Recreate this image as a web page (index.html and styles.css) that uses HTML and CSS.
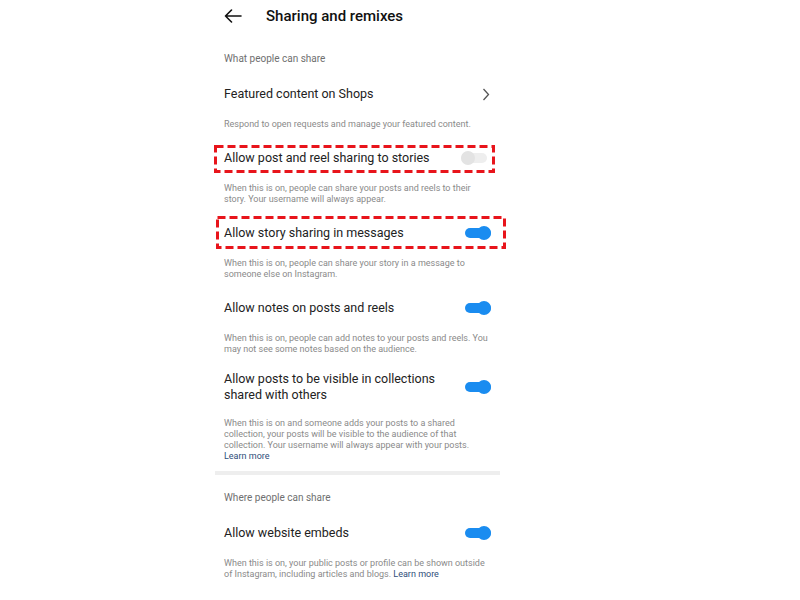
FILE: index.html
```html
<!DOCTYPE html>
<html lang="en">
<head>
    <meta charset="UTF-8">
    <meta name="viewport" content="width=device-width, initial-scale=1.0">
    <title>Sharing and remixes</title>
    <link rel="stylesheet" href="styles.css">
</head>
<body>
<div class="screen">
    <div class="header">
        <svg class="back" width="18" height="14" viewBox="0 0 18 14">
            <path d="M17 7H1.5M7.5 1L1.5 7l6 6" fill="none" stroke="#111" stroke-width="1.6" stroke-linecap="round" stroke-linejoin="round"/>
        </svg>
        <h1>Sharing and remixes</h1>
    </div>

    <p class="section-title first">What people can share</p>

    <div class="setting">
        <div class="row">
            <span class="label">Featured content on Shops</span>
            <svg class="chevron" width="8" height="13" viewBox="0 0 8 13">
                <path d="M1.5 1l5 5.5-5 5.5" fill="none" stroke="#555" stroke-width="1.3"/>
            </svg>
        </div>
        <p class="desc">Respond to open requests and manage your featured content.</p>
    </div>

    <div class="setting">
        <div class="row">
            <span class="label">Allow post and reel sharing to stories</span>
            <span class="toggle off"></span>
            <svg class="mark mark-one"><rect x="1.5" y="1.5" width="100%" height="100%" /></svg>
        </div>
        <p class="desc">When this is on, people can share your posts and reels to their story. Your username will always appear.</p>
    </div>

    <div class="setting">
        <div class="row">
            <span class="label">Allow story sharing in messages</span>
            <span class="toggle"></span>
            <svg class="mark mark-two"><rect x="1.5" y="1.5" width="100%" height="100%" /></svg>
        </div>
        <p class="desc">When this is on, people can share your story in a message to someone else on Instagram.</p>
    </div>

    <div class="setting">
        <div class="row">
            <span class="label">Allow notes on posts and reels</span>
            <span class="toggle"></span>
        </div>
        <p class="desc">When this is on, people can add notes to your posts and reels. You may not see some notes based on the audience.</p>
    </div>

    <div class="setting last">
        <div class="row tall">
            <span class="label">Allow posts to be visible in collections shared with others</span>
            <span class="toggle"></span>
        </div>
        <p class="desc">When this is on and someone adds your posts to a shared collection, your posts will be visible to the audience of that collection. Your username will always appear with your posts.<br><a href="#">Learn more</a></p>
    </div>

    <div class="divider"></div>

    <p class="section-title">Where people can share</p>

    <div class="setting">
        <div class="row">
            <span class="label">Allow website embeds</span>
            <span class="toggle"></span>
        </div>
        <p class="desc">When this is on, your public posts or profile can be shown outside of Instagram, including articles and blogs. <a href="#">Learn more</a></p>
    </div>
</div>
</body>
</html>
```

FILE: styles.css
```css
body {
    margin: 0;
    padding: 0;
    background-color: #ffffff;
    font-family: Roboto, "Liberation Sans", sans-serif;
    color: #262626;
}

.screen {
    width: 267px;
    margin-left: 213px;
    padding: 0 10px 0 11px;
}

.header {
    height: 32px;
    display: flex;
    align-items: center;
}

.back {
    display: block;
    margin-right: 24px;
}

.header h1 {
    margin: 0;
    font-size: 15px;
    font-weight: 500;
    color: #111;
}

.section-title {
    margin: 16px 0 16px;
    font-size: 10px;
    line-height: 14px;
    color: #6f6f6f;
}

.section-title.first {
    margin-top: 20px;
}

.setting {
    margin-bottom: 16px;
}

.setting.last {
    margin-bottom: 9px;
}

.row {
    position: relative;
    min-height: 24px;
    display: flex;
    align-items: center;
    justify-content: space-between;
}

.label {
    font-size: 12.5px;
    line-height: 16px;
    color: #222;
}

.row.tall .label {
    max-width: 215px;
}

.chevron {
    display: block;
    margin-right: 1px;
}

.desc {
    margin: 13px 0 0;
    font-size: 9px;
    line-height: 11px;
    color: #8a8a8a;
}

.row.tall + .desc {
    margin-top: 15px;
}

.desc a {
    color: #2f4e7a;
    text-decoration: none;
}

.toggle {
    position: relative;
    flex: none;
    width: 26px;
    height: 10px;
    border-radius: 5px;
    background-color: #1a8cf0;
}

.toggle::after {
    content: "";
    position: absolute;
    top: -2px;
    right: 0;
    width: 14px;
    height: 14px;
    border-radius: 50%;
    background-color: #1a8cf0;
}

.toggle.off {
    margin-right: 4px;
    background-color: #eeeeee;
}

.toggle.off::after {
    left: 0;
    right: auto;
    background-color: #e3e3e3;
}

.mark {
    position: absolute;
    overflow: visible;
    pointer-events: none;
}

.mark rect {
    fill: none;
    stroke: #e8141b;
    stroke-width: 3;
    stroke-dasharray: 8 4;
    width: calc(100% - 3px);
    height: calc(100% - 3px);
}

.mark-one {
    left: -10px;
    top: -1px;
    width: 281px;
    height: 28px;
}

.mark-two {
    left: -8px;
    top: -5px;
    width: 290px;
    height: 33px;
}

.divider {
    height: 4px;
    margin: 0 -9px 0 -9px;
    background-color: #eeeeee;
}
```
